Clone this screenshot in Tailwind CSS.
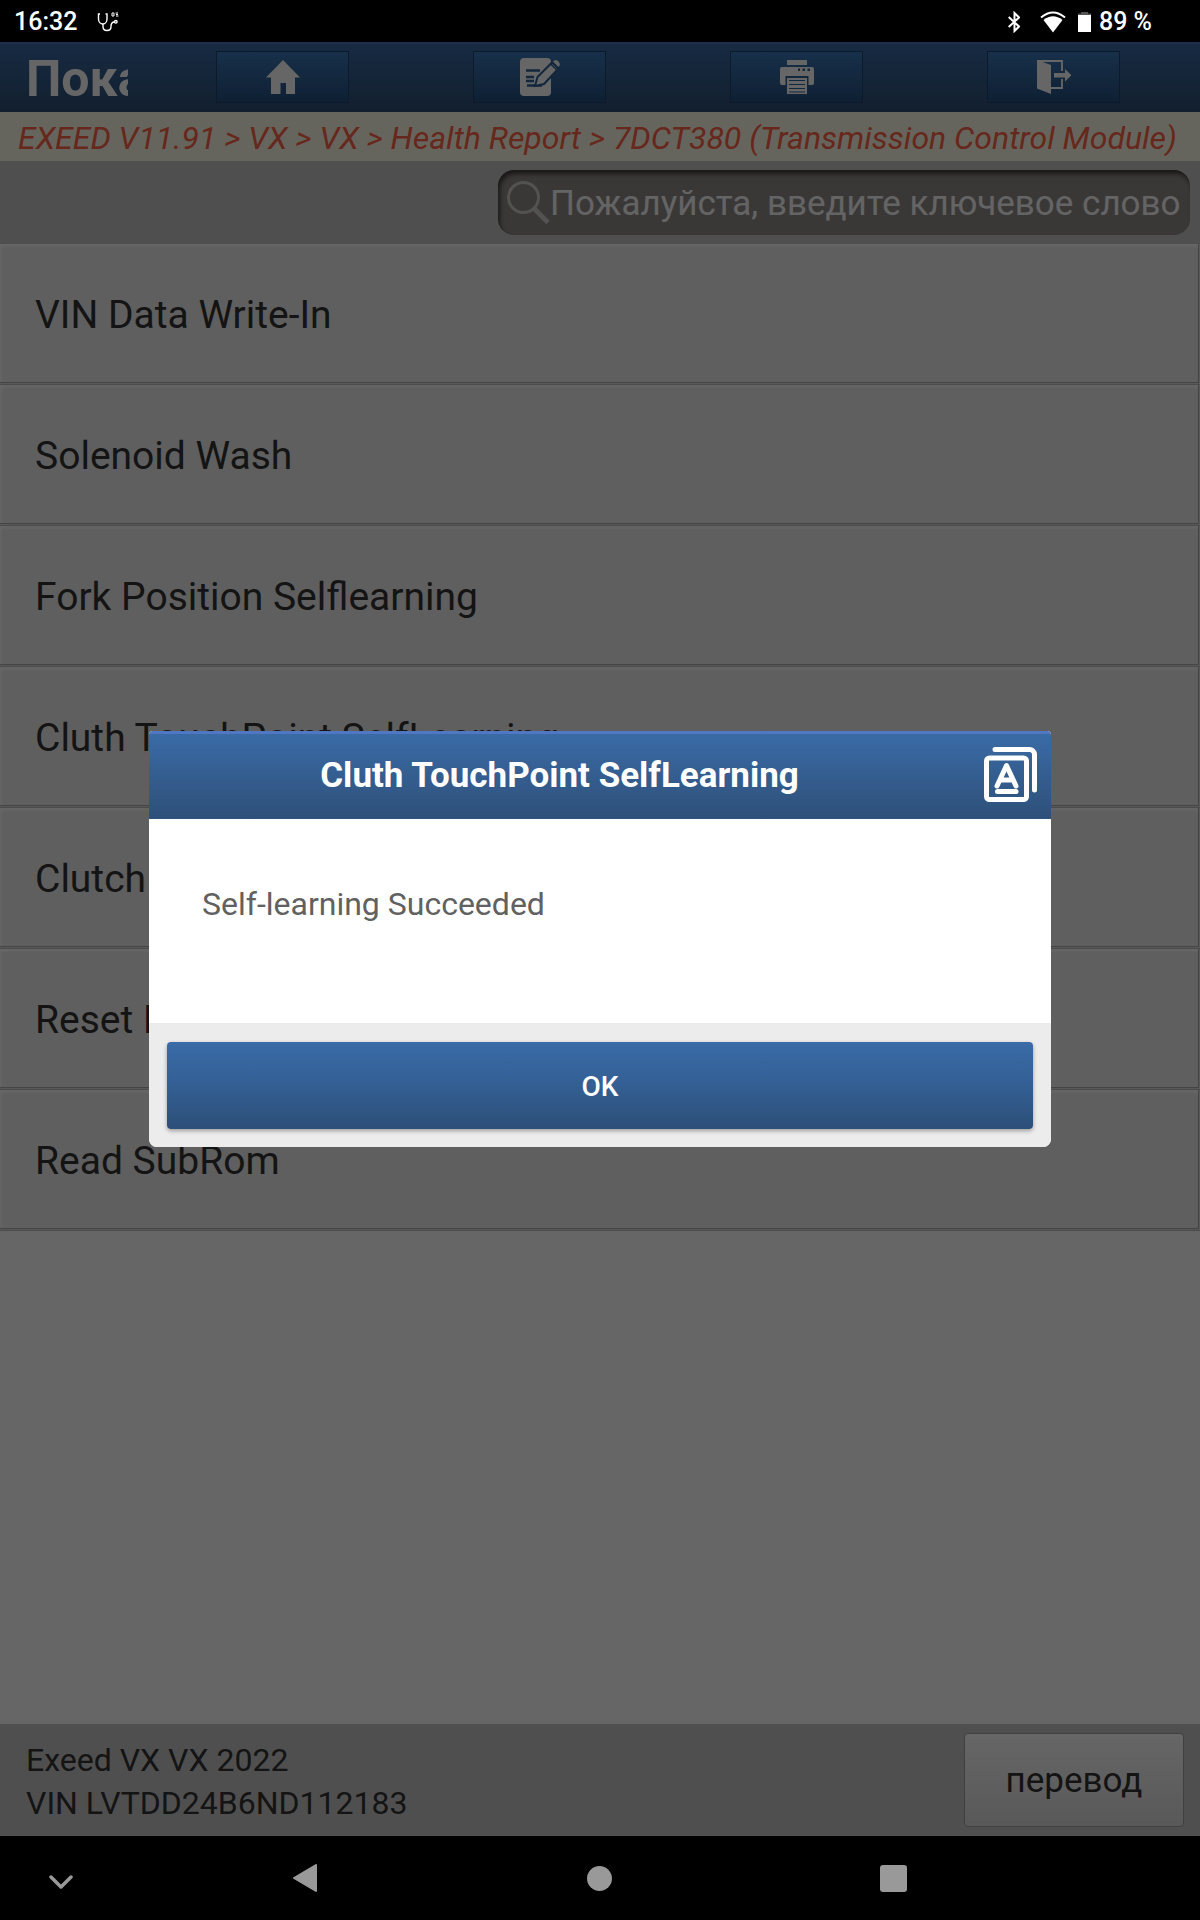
<!DOCTYPE html>
<html lang="ru">
<head>
  <meta charset="UTF-8">
  <meta name="viewport" content="width=device-width, initial-scale=1.0">
  <title>EXEED - Cluth TouchPoint SelfLearning</title>
  <script src="https://cdn.jsdelivr.net/npm/@tailwindcss/browser@4"></script>
</head>
<body class="flex flex-col min-h-screen bg-black font-['Roboto',sans-serif]">

  <!-- Android status bar -->
  <div class="flex items-center h-[42px] shrink-0 pt-px pl-3.5 pr-12 text-white text-[25px] font-medium">
    <span>16:32</span>
    <svg class="ml-5 w-[22px] h-5" viewBox="0 0 22 20" fill="none" stroke="#fff" stroke-width="1.4">
      <path d="M3 2H1.5v5c0 3 2 5 4.300 5S10 10 10 7V2H8.500" />
      <path d="M6 12v2.500c0 2.500 1.500 4 4 4s4-1.500 4-4c0-3 1-4.500 3.500-4.500" />
      <circle cx="18.800" cy="9.800" r="1.300" />
      <path d="M15 1h2v3h-2zM18.500 1H21M19 4h2.500M19 2.500h2" stroke-width="1" />
    </svg>
    <div class="flex items-center ml-auto">
      <svg class="w-3 h-[22px] mr-5" viewBox="0 0 12 22" fill="none" stroke="#fff" stroke-width="2">
        <path d="M0.700 6L11 15.500L6.500 20V2L11 6.500L0.700 16" />
      </svg>
      <svg class="w-[26px] h-[22px] mr-3" viewBox="0 0 26 22">
        <path d="M1 6.500Q13 -3.500 25 6.500" fill="none" stroke="#fff" stroke-width="2" />
        <path d="M3.500 9Q13 1.500 22.500 9L13 21.500z" fill="#fff" />
      </svg>
      <svg class="w-[13px] h-5 mr-2" viewBox="0 0 13 20">
        <path d="M3 0h7v1.500h3V3H0V1.500h3z" fill="#555" />
        <path d="M0 3h13v17H0z" fill="#fff" />
      </svg>
      <span>89 %</span>
    </div>
  </div>

  <div class="relative flex flex-col flex-1 bg-white text-[#333]">

    <header class="flex items-center h-[70px] pl-[26px] pr-[18px] pb-0.5 border-t-2 border-[#4e76be] bg-linear-to-b from-[#3c6ba8] to-[#2e4e74]">
      <h1 class="w-[102px] mr-[26px] pt-1 overflow-hidden whitespace-nowrap text-white text-[50px] leading-[60px] font-bold">Показать</h1>
      <div class="grid grid-cols-4 flex-1 justify-items-center">
        <button aria-label="Home" class="flex items-center justify-center w-[133px] h-[52px] border border-[#1c446c] bg-linear-to-b from-[#3c78b8] to-[#265080]">
          <svg class="w-[34px] h-[34px]" viewBox="0 0 34 34" fill="#fff">
            <path d="M17 0L34 17.500H29V34H20V23H14.500V34H5V17.500H0z" />
          </svg>
        </button>
        <button aria-label="Edit" class="flex items-center justify-center w-[133px] h-[52px] border border-[#1c446c] bg-linear-to-b from-[#3c78b8] to-[#265080]">
          <svg class="w-10 h-10" viewBox="0 0 40 40">
            <rect x="0" y="1" width="31" height="38" rx="4" fill="#fff" />
            <path d="M6 13.500H20M6 20H14M6 24H14M7 28.500H22" stroke="#2e5f96" stroke-width="2.400" fill="none" />
            <path d="M15 29l2.500-9L32 5.500l6.500 6L24 27z" fill="#fff" stroke="#2e5f96" stroke-width="2" />
            <path d="M33 4.500q3-3 5.500 0t0 5.500z" fill="#fff" />
            <path d="M30.500 7l6 5.500" stroke="#2e5f96" stroke-width="1.500" />
          </svg>
        </button>
        <button aria-label="Print" class="flex items-center justify-center w-[133px] h-[52px] border border-[#1c446c] bg-linear-to-b from-[#3c78b8] to-[#265080]">
          <svg class="w-[34px] h-[34px]" viewBox="0 0 34 34">
            <path d="M7 0h20v5H7z" fill="#fff" />
            <path d="M2 7h30a2 2 0 0 1 2 2v14a2 2 0 0 1-2 2H2a2 2 0 0 1-2-2V9a2 2 0 0 1 2-2z" fill="#fff" />
            <path d="M5.500 16h23v9h-23z" fill="#2e5f96" />
            <path d="M7 18h20v16H7z" fill="#fff" />
            <path d="M18 8.500h2v2.500h-2zM22.500 8.500h2.500v2.500h-2.500zM27.500 8.500h2.500v2.500h-2.500z" fill="#2e5f96" />
            <path d="M9 20.500h16M9 24.500h16M9 28.500h16M9 32h16" stroke="#2e5f96" stroke-width="1.200" />
          </svg>
        </button>
        <button aria-label="Exit" class="flex items-center justify-center w-[133px] h-[52px] border border-[#1c446c] bg-linear-to-b from-[#3c78b8] to-[#265080]">
          <svg class="w-[34px] h-[34px]" viewBox="0 0 34 34">
            <path d="M0 0l14 5v29L0 28.500z" fill="#fff" />
            <path d="M0 1H25V11M25 19V28H14" fill="none" stroke="#fff" stroke-width="1.800" />
            <path d="M17 13h11V9l6.500 6.200L28 21.500V17.500H17z" fill="#fff" />
          </svg>
        </button>
      </div>
    </header>

    <nav class="h-[49px] px-[18px] overflow-hidden whitespace-nowrap bg-[#fffce9] text-[#ff6347] text-[32px] leading-[52px] italic">
      EXEED V11.91 &gt; VX &gt; VX &gt; Health Report &gt; 7DCT380 (Transmission Control Module)
    </nav>

    <div class="flex justify-end items-center h-[83px] px-2.5 bg-[#c6c6c6]">
      <label class="flex items-center w-[692px] h-[65px] pl-2 pr-1 rounded-2xl bg-[#918c8a] shadow-[inset_2px_4px_4px_#403e3c]">
        <svg class="w-[44px] h-[44px] shrink-0" viewBox="0 0 44 44" fill="none" stroke="#ccc">
          <circle cx="17.500" cy="16.500" r="15" stroke-width="3" />
          <path d="M28 27.500L42 41.500" stroke-width="5" />
        </svg>
        <input type="text" aria-label="Поиск" placeholder="Пожалуйста, введите ключевое слово"
          class="flex-1 min-w-0 pt-1 text-[35px] text-[#333] placeholder:text-[#fafafa] focus:outline-none">
      </label>
    </div>

    <ul class="text-[39px]">
      <li class="pb-px pr-px border-b border-[#bcbcbc] bg-[#dedede]">
        <button class="block w-full h-[139px] px-[35px] pt-1 text-left whitespace-nowrap border-r border-b border-[#adadad] bg-[#ededed] shadow-[inset_2px_3px_2px_#fcfcfc]">VIN Data Write-In</button>
      </li>
      <li class="pb-px pr-px border-b border-[#bcbcbc] bg-[#dedede]">
        <button class="block w-full h-[139px] px-[35px] pt-1 text-left whitespace-nowrap border-r border-b border-[#adadad] bg-[#ededed] shadow-[inset_2px_3px_2px_#fcfcfc]">Solenoid Wash</button>
      </li>
      <li class="pb-px pr-px border-b border-[#bcbcbc] bg-[#dedede]">
        <button class="block w-full h-[139px] px-[35px] pt-1 text-left whitespace-nowrap border-r border-b border-[#adadad] bg-[#ededed] shadow-[inset_2px_3px_2px_#fcfcfc]">Fork Position Selflearning</button>
      </li>
      <li class="pb-px pr-px border-b border-[#bcbcbc] bg-[#dedede]">
        <button class="block w-full h-[139px] px-[35px] pt-1 text-left whitespace-nowrap border-r border-b border-[#adadad] bg-[#ededed] shadow-[inset_2px_3px_2px_#fcfcfc]">Cluth TouchPoint SelfLearning</button>
      </li>
      <li class="pb-px pr-px border-b border-[#bcbcbc] bg-[#dedede]">
        <button class="block w-full h-[139px] px-[35px] pt-1 text-left whitespace-nowrap border-r border-b border-[#adadad] bg-[#ededed] shadow-[inset_2px_3px_2px_#fcfcfc]">Clutch</button>
      </li>
      <li class="pb-px pr-px border-b border-[#bcbcbc] bg-[#dedede]">
        <button class="block w-full h-[139px] px-[35px] pt-1 text-left whitespace-nowrap border-r border-b border-[#adadad] bg-[#ededed] shadow-[inset_2px_3px_2px_#fcfcfc]">Reset Data</button>
      </li>
      <li class="pb-px pr-px border-b border-[#bcbcbc] bg-[#dedede]">
        <button class="block w-full h-[139px] px-[35px] pt-1 text-left whitespace-nowrap border-r border-b border-[#adadad] bg-[#ededed] shadow-[inset_2px_3px_2px_#fcfcfc]">Read SubRom</button>
      </li>
    </ul>

    <footer class="flex items-center justify-between h-28 mt-auto pl-[26px] pr-4 bg-[#c6c6c6]">
      <p class="pt-1 text-[32px] leading-[43px]">Exeed VX VX 2022<br>VIN LVTDD24B6ND112183</p>
      <button class="w-[220px] h-[94px] pt-0.5 rounded-sm border border-[#a0a0a0] bg-linear-to-b from-white to-[#dedede] text-[35px]">перевод</button>
    </footer>

    <!-- Dialog -->
    <div class="absolute inset-0 flex items-center justify-center bg-black/60">
      <div role="dialog" aria-labelledby="dialog-title" class="w-[902px] max-w-full overflow-hidden rounded-t-sm rounded-b-lg bg-white">
        <div class="flex items-center h-[88px] border-t-3 border-[#4f77c2] bg-linear-to-b from-[#3a6ba6] to-[#2e5079]">
          <h2 id="dialog-title" class="flex-1 text-center text-white text-[35px] font-bold">Cluth TouchPoint SelfLearning</h2>
          <button aria-label="Translate" class="px-3.5 pb-1">
            <svg class="w-[53px] h-[55px]" viewBox="0 0 53 55" fill="none" stroke="#fff" stroke-width="5" stroke-linecap="round" stroke-linejoin="round">
              <path d="M11 2.500H45.500a5 5 0 0 1 5 5V43" />
              <rect x="2.500" y="11" width="40" height="41.500" rx="3" />
              <path d="M13 39L22.500 18.500L32 39M17 33H28" />
              <path d="M13.500 44.500H32" />
            </svg>
          </button>
        </div>
        <p class="h-[204px] px-[53px] pt-16 text-[32px] leading-[43px] text-[#616161]">Self-learning Succeeded</p>
        <div class="px-[18px] pt-[19px] pb-[18px] bg-[#ececec]">
          <button class="block w-full h-[87px] pt-0.5 rounded-sm bg-linear-to-b from-[#3a6ba8] via-[#335f93] to-[#2c4f78] text-white text-[28px] font-medium shadow-[0_2px_4px_#00000055]">OK</button>
        </div>
      </div>
    </div>
  </div>

  <!-- Android navigation bar -->
  <div class="flex items-center h-[84px] shrink-0">
    <button aria-label="Hide" class="flex justify-center w-[122px] pt-2">
      <svg class="w-6 h-4" viewBox="0 0 24 16" fill="none" stroke="#999" stroke-width="3.500" stroke-linecap="round" stroke-linejoin="round">
        <path d="M2 3L12 13L22 3" />
      </svg>
    </button>
    <div class="grid grid-cols-3 flex-1 justify-items-center items-center pl-9 pr-40">
      <button aria-label="Back">
        <svg class="block w-[26px] h-7" viewBox="0 0 26 28" fill="#999" stroke="#999" stroke-width="2" stroke-linejoin="round">
          <path d="M24 1V27L2 14z" />
        </svg>
      </button>
      <button aria-label="Home" class="w-[25px] h-[25px] rounded-full bg-[#999]"></button>
      <button aria-label="Recent" class="w-[27px] h-[27px] rounded-[3px] bg-[#999]"></button>
    </div>
  </div>

</body>
</html>
